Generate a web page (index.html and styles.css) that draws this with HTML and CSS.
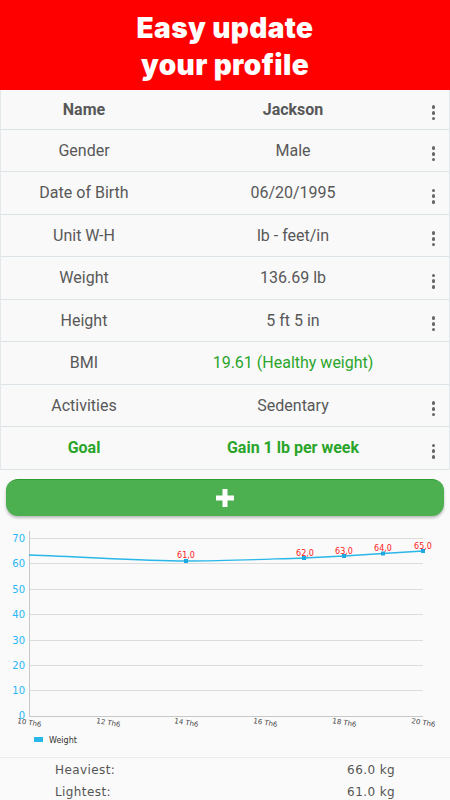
FILE: index.html
```html
<!DOCTYPE html>
<html>
<head>
<meta charset="utf-8">
<link rel="stylesheet" href="styles.css">
</head>
<body>
<div class="page">
  <header class="hero">
    <div>Easy update</div>
    <div>your profile</div>
  </header>
  <div class="list">
    <div class="row first bold"><span class="lbl">Name</span><span class="val">Jackson</span><span class="more"><i></i><i></i><i></i></span></div>
    <div class="row"><span class="lbl">Gender</span><span class="val">Male</span><span class="more"><i></i><i></i><i></i></span></div>
    <div class="row"><span class="lbl">Date of Birth</span><span class="val">06/20/1995</span><span class="more"><i></i><i></i><i></i></span></div>
    <div class="row"><span class="lbl">Unit W-H</span><span class="val">lb - feet/in</span><span class="more"><i></i><i></i><i></i></span></div>
    <div class="row"><span class="lbl">Weight</span><span class="val">136.69 lb</span><span class="more"><i></i><i></i><i></i></span></div>
    <div class="row"><span class="lbl">Height</span><span class="val">5 ft 5 in</span><span class="more"><i></i><i></i><i></i></span></div>
    <div class="row"><span class="lbl">BMI</span><span class="val green">19.61 (Healthy weight)</span><span class="more empty"></span></div>
    <div class="row"><span class="lbl">Activities</span><span class="val">Sedentary</span><span class="more"><i></i><i></i><i></i></span></div>
    <div class="row bold greenrow"><span class="lbl">Goal</span><span class="val">Gain 1 lb per week</span><span class="more"><i></i><i></i><i></i></span></div>
  </div>
  <button class="add">
    <svg width="18" height="18" viewBox="0 0 18 18"><rect x="6.5" y="0" width="5" height="18" fill="#fff"/><rect x="0" y="6.5" width="18" height="5" fill="#fff"/></svg>
  </button>
  <div class="chart">
    <svg width="450" height="237" viewBox="0 0 450 237">
      <g stroke="#dcdcdc" stroke-width="1">
        <line x1="29" y1="17.5" x2="423" y2="17.5"/>
        <line x1="29" y1="42.5" x2="423" y2="42.5"/>
        <line x1="29" y1="68.5" x2="423" y2="68.5"/>
        <line x1="29" y1="93.5" x2="423" y2="93.5"/>
        <line x1="29" y1="119.5" x2="423" y2="119.5"/>
        <line x1="29" y1="144.5" x2="423" y2="144.5"/>
        <line x1="29" y1="169.5" x2="423" y2="169.5"/>
      </g>
      <line x1="29.5" y1="10" x2="29.5" y2="195" stroke="#c8c8c8"/>
      <line x1="29" y1="195.5" x2="423" y2="195.5" stroke="#c8c8c8"/>
      <g class="ylab" fill="#29b6f6" font-size="10" text-anchor="end">
        <text x="25" y="21">70</text>
        <text x="25" y="46">60</text>
        <text x="25" y="72">50</text>
        <text x="25" y="97">40</text>
        <text x="25" y="123">30</text>
        <text x="25" y="148">20</text>
        <text x="25" y="173">10</text>
        <text x="25" y="198">0</text>
      </g>
      <g class="xlab" fill="#444" font-size="7" text-anchor="middle">
        <text transform="translate(29,204) rotate(10)">10 Th6</text>
        <text transform="translate(108,204) rotate(10)">12 Th6</text>
        <text transform="translate(186,204) rotate(10)">14 Th6</text>
        <text transform="translate(265,204) rotate(10)">16 Th6</text>
        <text transform="translate(344,204) rotate(10)">18 Th6</text>
        <text transform="translate(423,204) rotate(10)">20 Th6</text>
      </g>
      <path d="M29 34 C 90 36, 140 40, 186 40 C 230 40, 270 38, 304 37 L 344 35 L 383 32.5 L 423 30" fill="none" stroke="#29b6e8" stroke-width="1.3"/>
      <g fill="#1ea8e0">
        <rect x="184" y="38" width="4" height="4"/>
        <rect x="302" y="35" width="4" height="4"/>
        <rect x="342" y="33" width="4" height="4"/>
        <rect x="381" y="30.5" width="4" height="4"/>
        <rect x="421" y="28" width="4" height="4"/>
      </g>
      <g class="vlab" fill="#ff2020" font-size="8" text-anchor="middle">
        <text x="186" y="37">61,0</text>
        <text x="305" y="35">62,0</text>
        <text x="344" y="33">63,0</text>
        <text x="383" y="30">64,0</text>
        <text x="423" y="28">65,0</text>
      </g>
      <rect x="34" y="216" width="9" height="5" fill="#29b6e8"/>
      <text class="legend" x="49" y="222" font-size="8" fill="#333">Weight</text>
    </svg>
  </div>
  <div class="stats">
    <div class="stat"><span>Heaviest:</span><span>66.0 kg</span></div>
    <div class="stat"><span>Lightest:</span><span>61.0 kg</span></div>
  </div>
</div>
</body>
</html>
```

FILE: styles.css
```css
* { box-sizing: border-box; }
html, body {
  margin: 0;
  padding: 0;
  background: #fafafa;
}
body {
  font-family: Roboto, "Noto Sans", sans-serif;
  width: 450px;
  height: 800px;
  overflow: hidden;
}
.hero {
  height: 90px;
  background: #ff0000;
  color: #fff;
  font-family: Inter, Roboto, sans-serif;
  font-weight: 900;
  font-size: 28px;
  line-height: 37px;
  text-align: center;
  padding-top: 10px;
  letter-spacing: 0.4px;
}
.list {
  border-left: 1px solid #e3e8ea;
  border-right: 1px solid #e3e8ea;
}
.row {
  display: grid;
  grid-template-columns: 166px 1fr 32px;
  align-items: center;
  height: 42.5px;
  border-bottom: 1px solid #dde4e7;
  background: #f9f9f9;
  color: #585858;
  font-size: 16px;
}
.row.first { height: 39.5px; }
.lbl, .val { text-align: center; }
.val { padding-left: 2px; }
.bold { font-weight: 700; }
.green { color: #2aa52a; }
.greenrow { color: #2aa52a; }
.more {
  display: flex;
  flex-direction: column;
  align-items: center;
  gap: 2px;
  margin-top: 7px;
  padding-left: 1px;
}
.more i {
  display: block;
  width: 3.6px;
  height: 3.6px;
  border-radius: 50%;
  background: #666;
}
.add {
  display: flex;
  align-items: center;
  justify-content: center;
  width: 438px;
  height: 37px;
  margin: 9px 0 0 6px;
  border: none;
  border-top: 1px solid #2e9e34;
  border-radius: 12px;
  background: #4caf50;
  box-shadow: 0 2px 3px rgba(0,0,0,0.25);
  padding: 0;
}
.chart {
  height: 237px;
  margin-top: 5px;
  border-bottom: 1px solid #e8eef0;
}
.chart svg { display: block; font-family: "DejaVu Sans", sans-serif; }
.stats {
  padding: 1px 55px 0 55px;
  color: #555;
  font-family: "DejaVu Sans", sans-serif;
  font-size: 12px;
  letter-spacing: 0.4px;
}
.stat {
  display: flex;
  justify-content: space-between;
  height: 22px;
  align-items: center;
}
```
